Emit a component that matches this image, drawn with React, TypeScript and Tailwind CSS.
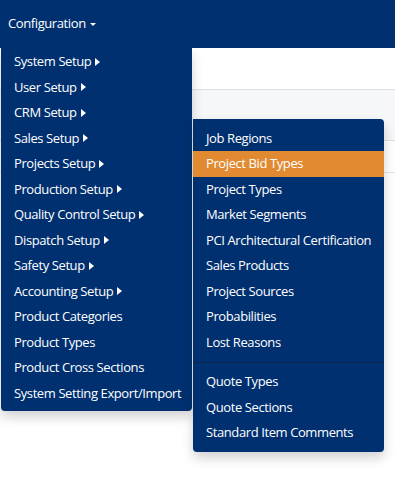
const mainItems: { label: string; sub?: boolean }[] = [
  { label: "System Setup", sub: true },
  { label: "User Setup", sub: true },
  { label: "CRM Setup", sub: true },
  { label: "Sales Setup", sub: true },
  { label: "Projects Setup", sub: true },
  { label: "Production Setup", sub: true },
  { label: "Quality Control Setup", sub: true },
  { label: "Dispatch Setup", sub: true },
  { label: "Safety Setup", sub: true },
  { label: "Accounting Setup", sub: true },
  { label: "Product Categories" },
  { label: "Product Types" },
  { label: "Product Cross Sections" },
  { label: "System Setting Export/Import" },
];

const salesItems = [
  "Job Regions",
  "Project Bid Types",
  "Project Types",
  "Market Segments",
  "PCI Architectural Certification",
  "Sales Products",
  "Project Sources",
  "Probabilities",
  "Lost Reasons",
];

const quoteItems = ["Quote Types", "Quote Sections", "Standard Item Comments"];

function Caret() {
  return (
    <svg width="5" height="8" viewBox="0 0 5 8" className="ml-[4px] shrink-0">
      <path d="M0 0 L5 4 L0 8 Z" fill="#ffffff" />
    </svg>
  );
}

function Row({ label, active, sub }: { label: string; active?: boolean; sub?: boolean }) {
  return (
    <div
      className={
        "flex items-center h-[25.5px] px-[13px] whitespace-nowrap " +
        (active ? "bg-[#e18a31]" : "")
      }
    >
      <span>{label}</span>
      {sub && <Caret />}
    </div>
  );
}

export default function App() {
  return (
    <div
      className="relative w-[395px] h-[481px] bg-white overflow-hidden text-white text-[13px] tracking-[-0.4px]"
      style={{ fontFamily: '"Open Sans", "Noto Sans", sans-serif' }}
    >
      <nav className="h-[48px] bg-[#003070] flex items-center px-[8px]">
        <span>Configuration</span>
        <svg width="6" height="4" viewBox="0 0 6 4" className="ml-[4px] mt-[1px]">
          <path d="M0 0 L6 0 L3 3 Z" fill="#ffffff" />
        </svg>
      </nav>
      <div className="h-[42px] bg-white border-b border-[#dde1e6]" />
      <div className="h-[51px] bg-[#f6f7f9] border-b border-[#dde1e6]" />
      <div className="h-[32px] bg-white border-b border-[#e3e6ea]" />

      <div className="absolute left-[1px] top-[48px] w-[191px] bg-[#003070] pt-[1px] pb-[5px] rounded-b-[4px] shadow-[0_6px_12px_rgba(0,0,0,0.18)]">
        {mainItems.map((item) => (
          <Row key={item.label} label={item.label} sub={item.sub} />
        ))}
      </div>

      <div className="absolute left-[193px] top-[119px] w-[191px] bg-[#003070] py-[6.5px] rounded-r-[4px] rounded-bl-[4px] shadow-[0_6px_12px_rgba(0,0,0,0.18)]">
        {salesItems.map((label) => (
          <Row key={label} label={label} active={label === "Project Bid Types"} />
        ))}
        <div className="my-[6.5px] border-t border-[#0c2650]" />
        {quoteItems.map((label) => (
          <Row key={label} label={label} />
        ))}
      </div>
    </div>
  );
}
